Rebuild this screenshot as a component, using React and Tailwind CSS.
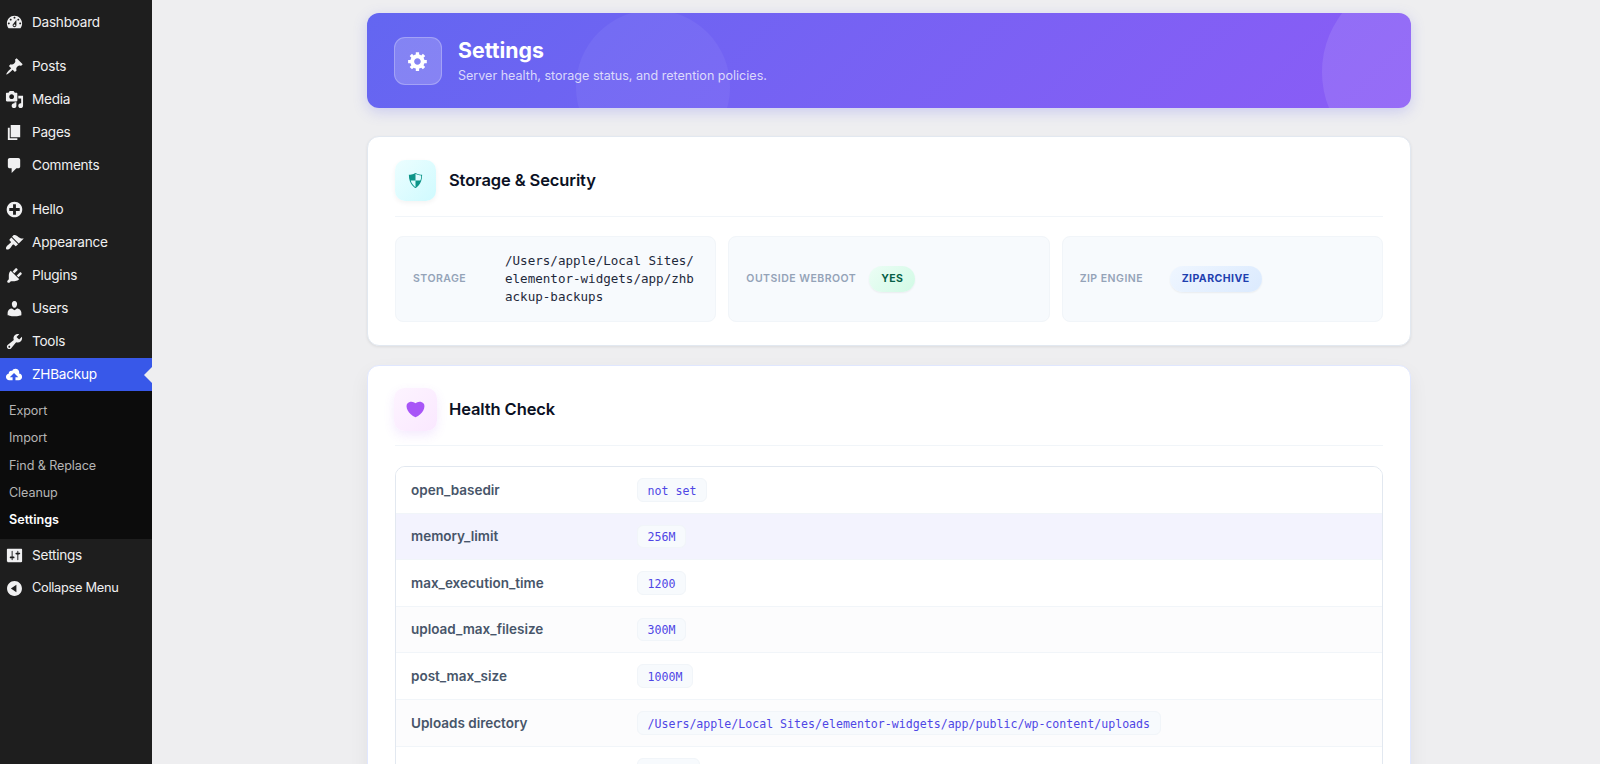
import React from "react";

const icons = {
    dashboard:
        "M3.76 16h12.48c1.1-1.37 1.76-3.11 1.76-5 0-4.42-3.58-8-8-8s-8 3.58-8 8c0 1.89.66 3.63 1.76 5zM10 4c.55 0 1 .45 1 1s-.45 1-1 1-1-.45-1-1 .45-1 1-1zM6 6c.55 0 1 .45 1 1s-.45 1-1 1-1-.45-1-1 .45-1 1-1zm8 0c.55 0 1 .45 1 1s-.45 1-1 1-1-.45-1-1 .45-1 1-1zm-5.37 5.55L12 7v6c0 1.1-.9 2-2 2s-2-.9-2-2c0-.57.24-1.08.63-1.45zM4 10c.55 0 1 .45 1 1s-.45 1-1 1-1-.45-1-1 .45-1 1-1zm12 0c.55 0 1 .45 1 1s-.45 1-1 1-1-.45-1-1 .45-1 1-1zm-5 3c0-.55-.45-1-1-1s-1 .45-1 1 .45 1 1 1 1-.45 1-1z",
    post: "M10.44 3.02l1.82-1.82 6.36 6.35-1.83 1.82c-1.05-.68-2.48-.57-3.41.36l-.75.75c-.92.93-1.04 2.35-.35 3.41l-1.83 1.82-2.41-2.41-2.8 2.79c-.42.42-3.38 2.71-3.8 2.29s1.86-3.39 2.28-3.81l2.79-2.79L4.1 9.36l1.83-1.82c1.05.69 2.48.57 3.4-.36l.75-.75c.93-.92 1.05-2.35.36-3.41z",
    media: "M13 11V4c0-.55-.45-1-1-1h-1.67L9 1H5L3.67 3H2c-.55 0-1 .45-1 1v7c0 .55.45 1 1 1h10c.55 0 1-.45 1-1zM7 4.5c1.38 0 2.5 1.12 2.5 2.5S8.38 9.5 7 9.5 4.5 8.38 4.5 7 5.62 4.5 7 4.5zM14 6h5v10.5c0 1.38-1.12 2.5-2.5 2.5S14 17.88 14 16.5s1.12-2.5 2.5-2.5c.17 0 .34.02.5.05V9h-3V6zm-4 8.05V13h2v3.5c0 1.38-1.12 2.5-2.5 2.5S7 17.88 7 16.5 8.12 14 9.5 14c.17 0 .34.02.5.05z",
    page: "M6 15V2h10v13H6zm-1 1h8v2H3V5h2v11z",
    comments:
        "M5 2h9c1.1 0 2 .9 2 2v7c0 1.1-.9 2-2 2h-2l-5 5v-5H5c-1.1 0-2-.9-2-2V4c0-1.1.9-2 2-2z",
    plus: "M15.8 4.2c3.2 3.21 3.2 8.39 0 11.6-3.21 3.2-8.39 3.2-11.6 0C1 12.59 1 7.41 4.2 4.2 7.41 1 12.59 1 15.8 4.2zm-4.3 11.3v-4h4v-3h-4v-4h-3v4h-4v3h4v4h3z",
    appearance:
        "M14.48 11.06L7.41 3.99l1.5-1.5c.5-.56 2.3-.47 3.51.32 1.21.8 1.43 1.28 2.91 2.1 1.18.64 2.45 1.26 4.45.85zm-.71.71L6.7 4.7 4.93 6.47c-.39.39-.39 1.02 0 1.41l1.06 1.06c.39.39.39 1.03 0 1.42-.6.6-1.43 1.11-2.21 1.69-.35.26-.7.53-1.01.84C1.43 14.23.4 16.08 1.4 17.07c.99 1 2.84-.03 4.18-1.36.31-.31.58-.66.85-1.02.57-.78 1.08-1.61 1.69-2.21.39-.39 1.02-.39 1.41 0l1.06 1.06c.39.39 1.02.39 1.41 0z",
    plugins:
        "M13.11 4.36L9.87 7.6 8 5.73l3.24-3.24c.35-.34 1.05-.2 1.56.32.52.51.66 1.21.31 1.55zm-8 1.77l.91-1.12 9.01 9.01-1.19.84c-.71.71-2.63 1.16-3.82 1.16H6.14L4.9 17.26c-.59.59-1.54.59-2.12 0-.59-.58-.59-1.53 0-2.12l1.24-1.24v-3.88c0-1.13.4-3.19 1.09-3.89zm7.26 3.97l3.24-3.24c.34-.35 1.04-.21 1.55.31.52.51.66 1.21.31 1.55l-3.24 3.25z",
    users: "M10 9.25c-2.27 0-2.73-3.44-2.73-3.44C7 4.02 7.82 2 9.97 2c2.16 0 2.98 2.02 2.71 3.81 0 0-.41 3.44-2.68 3.44zm0 2.57L12.72 10c2.39 0 4.52 2.33 4.52 4.53v2.49s-3.65 1.13-7.24 1.13c-3.65 0-7.24-1.13-7.24-1.13v-2.49c0-2.25 1.94-4.48 4.47-4.48z",
    tools: "M16.68 9.77c-1.34 1.34-3.3 1.67-4.95.99l-5.41 6.52c-.99.99-2.59.99-3.58 0s-.99-2.59 0-3.57l6.52-5.42c-.68-1.65-.35-3.61.99-4.95 1.28-1.28 3.12-1.62 4.72-1.06l-2.89 2.89 2.82 2.82 2.86-2.87c.53 1.58.18 3.39-1.08 4.65zM3.81 16.21c.4.39 1.04.39 1.43 0 .4-.4.4-1.04 0-1.43-.39-.4-1.03-.4-1.43 0-.39.39-.39 1.03 0 1.43z",
    cloud: "M14.8 9c.1-.3.2-.6.2-1 0-2.2-1.8-4-4-4-1.5 0-2.9.9-3.5 2.2-.3-.1-.7-.2-1-.2C5.1 6 4 7.1 4 8.5c0 .2 0 .4.1.5-1.8.3-3.1 1.7-3.1 3.5C1 14.4 2.6 16 4.5 16H8v-3H5l4.5-4.5L14 13h-3v3h3.5c1.9 0 3.5-1.6 3.5-3.5 0-1.8-1.4-3.3-3.2-3.5z",
    settings:
        "M18 16V4c0-.55-.45-1-1-1H3c-.55 0-1 .45-1 1v12c0 .55.45 1 1 1h14c.55 0 1-.45 1-1zM8 11h1c.55 0 1 .45 1 1s-.45 1-1 1H8v1.5c0 .28-.22.5-.5.5s-.5-.22-.5-.5V13H6c-.55 0-1-.45-1-1s.45-1 1-1h1V5.5c0-.28.22-.5.5-.5s.5.22.5.5V11zm5-2h-1c-.55 0-1-.45-1-1s.45-1 1-1h1V5.5c0-.28.22-.5.5-.5s.5.22.5.5V7h1c.55 0 1 .45 1 1s-.45 1-1 1h-1v5.5c0 .28-.22.5-.5.5s-.5-.22-.5-.5V9z",
    collapse:
        "M10 2.16c4.33 0 7.84 3.51 7.84 7.84s-3.51 7.84-7.84 7.84S2.16 14.33 2.16 10 5.71 2.16 10 2.16zm2 11.72V6.12L6.18 9.97z",
    gear: "M18 12h-2.18c-.17.7-.44 1.35-.81 1.93l1.54 1.54-2.1 2.1-1.54-1.54c-.58.36-1.23.63-1.91.79V19H8v-2.18c-.68-.16-1.33-.43-1.91-.79l-1.54 1.54-2.12-2.12 1.54-1.54c-.36-.58-.63-1.23-.79-1.91H1V9.03h2.17c.16-.7.44-1.35.8-1.94L2.43 5.55l2.1-2.1 1.54 1.54c.58-.37 1.24-.64 1.93-.81V2h3v2.18c.68.16 1.33.43 1.91.79l1.54-1.54 2.12 2.12-1.54 1.54c.36.59.64 1.24.8 1.94H18V12zm-8.5 1.5c1.66 0 3-1.34 3-3s-1.34-3-3-3-3 1.34-3 3 1.34 3 3 3z",
    shield: "M10 2s3 2 7 2c0 11-7 14-7 14S3 15 3 4c4 0 7-2 7-2zm0 8h5s1-1 1-5c0 0-5-1-6-2v7H5c1 4 5 7 5 7v-7z",
    heart: "M10 17.12c3.33-1.4 5.74-3.79 7.04-6.21 1.28-2.41 1.46-4.81.32-6.25-1.03-1.29-2.37-1.78-3.73-1.74s-2.68.63-3.63 1.46c-.95-.83-2.27-1.42-3.63-1.46s-2.7.45-3.73 1.74c-1.14 1.44-.96 3.84.34 6.25 1.28 2.42 3.69 4.81 7.02 6.21z",
};

const Icon = ({ name, className }) => (
    <svg viewBox="0 0 20 20" fill="currentColor" className={className}>
        <path d={icons[name]} />
    </svg>
);

const MenuItem = ({ icon, label, active, small }) => (
    <li
        className={`relative flex items-center h-[33px] pl-[5px] ${
            active ? "bg-[#3858e9] text-white" : "text-[#f0f0f1]"
        }`}
    >
        <Icon name={icon} className="w-[19px] h-[19px] shrink-0" />
        <span
            className={`ml-2 ${
                small
                    ? "text-[12.8px] tracking-[-0.28px]"
                    : "text-[13.6px] tracking-[-0.25px]"
            }`}
        >
            {label}
        </span>
        {active && (
            <span className="absolute right-0 top-[9px] border-y-8 border-r-8 border-y-transparent border-r-[#eeeef0]"></span>
        )}
    </li>
);

const submenu = ["Export", "Import", "Find & Replace", "Cleanup", "Settings"];

const Sidebar = () => (
    <aside className="w-[152px] shrink-0 bg-[#1e1e1e] pt-1.5 leading-none">
        <ul>
            <MenuItem icon="dashboard" label="Dashboard" />
        </ul>
        <ul className="mt-[11px]">
            <MenuItem icon="post" label="Posts" />
            <MenuItem icon="media" label="Media" />
            <MenuItem icon="page" label="Pages" />
            <MenuItem icon="comments" label="Comments" />
        </ul>
        <ul className="mt-[11px]">
            <MenuItem icon="plus" label="Hello" />
            <MenuItem icon="appearance" label="Appearance" />
            <MenuItem icon="plugins" label="Plugins" />
            <MenuItem icon="users" label="Users" />
            <MenuItem icon="tools" label="Tools" />
            <MenuItem icon="cloud" label="ZHBackup" active />
        </ul>
        <ul className="bg-[#0c0c0c] pt-[6.6px] pb-[4.9px] text-[12.6px] tracking-[-0.1px]">
            {submenu.map((label) => (
                <li
                    key={label}
                    className={`flex items-center h-[27.3px] pl-[9px] ${
                        label === "Settings"
                            ? "font-semibold tracking-normal text-white"
                            : "text-[#b5b5b5]"
                    }`}
                >
                    {label}
                </li>
            ))}
        </ul>
        <ul>
            <MenuItem icon="settings" label="Settings" />
            <MenuItem icon="collapse" label="Collapse Menu" small />
        </ul>
    </aside>
);

const Hero = () => (
    <header className="relative overflow-hidden flex items-center h-[95px] px-[27px] rounded-xl bg-linear-135 from-[#6366f1] to-[#8b5cf6]">
        <div className="absolute left-[209px] -top-[3px] size-[154px] rounded-full bg-white/5"></div>
        <div className="absolute left-[955px] -top-[37px] size-[192px] rounded-full bg-white/10"></div>
        <div className="flex items-center justify-center size-12 rounded-[11px] bg-white/20 border border-white/25 text-white">
            <Icon name="gear" className="size-[22px]" />
        </div>
        <div className="ml-4 pt-0.5">
            <h1 className="text-[21.3px] leading-[26px] font-bold text-white">
                Settings
            </h1>
            <p className="mt-[3px] text-[12.55px] leading-5 text-white/75">
                Server health, storage status, and retention policies.
            </p>
        </div>
    </header>
);

const Tile = ({ label, children }) => (
    <div className="flex items-center gap-3.5 h-[86px] px-[17px] rounded-lg bg-[#f7fafd] border border-[#f1f5f9]">
        <span className="min-w-[76px] shrink-0 text-[10.5px] font-semibold tracking-[0.48px] text-[#94a3b8]">
            {label}
        </span>
        {children}
    </div>
);

const StorageCard = () => (
    <section className="mt-7 h-[210px] px-[27px] pt-[23px] rounded-xl bg-white border border-[#e2e8f0] shadow-[0_1px_3px_rgba(0,0,0,0.08)]">
        <div className="flex items-center gap-[13px] h-[57px] pb-4 border-b border-[#f1f5f9]">
            <div className="flex items-center justify-center size-[41px] rounded-[10px] bg-linear-135 from-[#ecfeff] to-[#cffafe] text-[#0d9488] shadow-[0_2px_5px_rgba(0,0,0,0.05)]">
                <Icon name="shield" className="size-[19px]" />
            </div>
            <h2 className="text-[16.5px] font-semibold tracking-[-0.11px] text-[#0b1124]">
                Storage &amp; Security
            </h2>
        </div>
        <div className="grid grid-cols-3 gap-3 mt-[19px]">
            <Tile label="STORAGE">
                <span className="ml-0.5 font-[DejaVu_Sans_Mono,monospace] text-[12.55px] leading-[17.8px] break-all text-[#1e293b]">
                    /Users/apple/Local Sites/elementor-widgets/app/zhbackup-backups
                </span>
            </Tile>
            <Tile label="OUTSIDE WEBROOT">
                <span className="-ml-px px-3 rounded-full bg-linear-135 from-[#ecfdf5] to-[#d1fae5] text-[10.5px] leading-[26px] font-bold tracking-[0.45px] text-[#065f46] shadow-[0_1px_2px_rgba(0,0,0,0.06)]">
                    YES
                </span>
            </Tile>
            <Tile label="ZIP ENGINE">
                <span className="px-3 rounded-full bg-linear-135 from-[#eff6ff] to-[#dbeafe] text-[10.5px] leading-[26px] font-bold tracking-[0.45px] text-[#1e40af] shadow-[0_1px_2px_rgba(0,0,0,0.06)]">
                    ZIPARCHIVE
                </span>
            </Tile>
        </div>
    </section>
);

const checks = [
    { name: "open_basedir", value: "not set", bg: "bg-white" },
    { name: "memory_limit", value: "256M", bg: "bg-[#f3f3fe]" },
    { name: "max_execution_time", value: "1200", bg: "bg-white" },
    { name: "upload_max_filesize", value: "300M", bg: "bg-[#fcfcfd]" },
    { name: "post_max_size", value: "1000M", bg: "bg-white" },
    {
        name: "Uploads directory",
        value: "/Users/apple/Local Sites/elementor-widgets/app/public/wp-content/uploads",
        bg: "bg-[#fcfcfd]",
    },
    { name: "", value: "", bg: "bg-white" },
];

const HealthCard = () => (
    <section className="mt-[19px] px-[27px] pt-[23px] pb-7 rounded-xl bg-white border border-[#e0e7ff] shadow-[0_8px_20px_rgba(0,0,0,0.06)]">
        <div className="flex items-center gap-[13px] h-[57px] pb-4 border-b border-[#f1f5f9]">
            <div className="flex items-center justify-center size-[41px] scale-105 rounded-[10px] bg-linear-135 from-[#fdf4ff] to-[#fae8ff] text-[#a855f7] shadow-[0_4px_10px_rgba(168,85,247,0.12)]">
                <Icon name="heart" className="size-[21px]" />
            </div>
            <h2 className="text-[16.5px] font-semibold tracking-[-0.11px] text-[#0b1124]">
                Health Check
            </h2>
        </div>
        <div className="mt-5 overflow-hidden rounded-[10px] border border-[#e2e8f0]">
            {checks.map(({ name, value, bg }) => (
                <div
                    key={name}
                    className={`flex items-center h-[46.6px] pl-[15px] border-b border-[#f1f5f9] ${bg}`}
                >
                    <span className="w-[226px] shrink-0 text-[13.5px] font-semibold text-[#475569]">
                        {name}
                    </span>
                    <code className="min-w-[49px] min-h-[23px] pt-[1.5px] px-[9.5px] rounded-md bg-[#f7fafd] border border-[#f1f5f9] font-[DejaVu_Sans_Mono,monospace] text-[11.6px] leading-[20px] text-[#4f46e5] empty:w-[63px]">
                        {value}
                    </code>
                </div>
            ))}
        </div>
    </section>
);

const App = () => (
    <div className="flex h-[764px] overflow-hidden bg-[#eeeef0] font-[Inter,sans-serif]">
        <Sidebar />
        <main className="flex-1 pt-[13px]">
            <div className="w-[1044px] ml-[215px]">
                <div className="rounded-xl shadow-[0_4px_14px_rgba(99,102,241,0.25)]">
                    <Hero />
                </div>
                <StorageCard />
                <HealthCard />
            </div>
        </main>
    </div>
);

export default App;
